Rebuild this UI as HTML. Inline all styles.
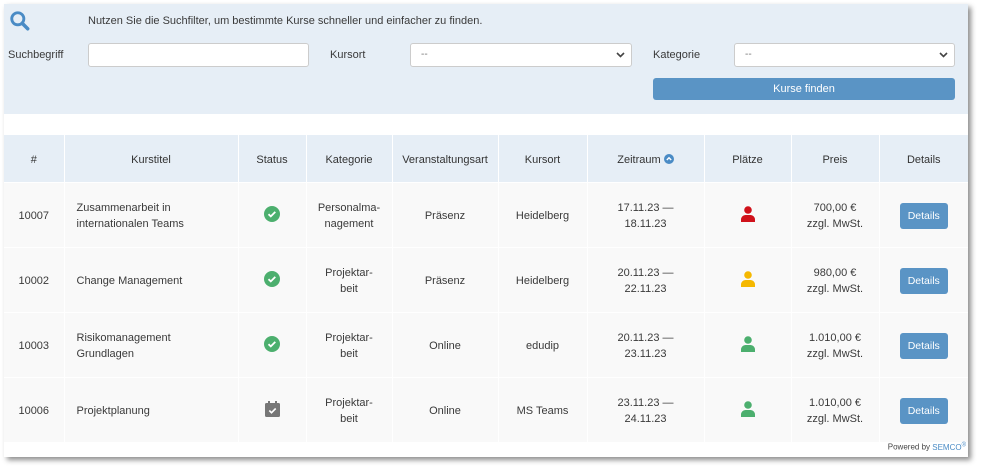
<!DOCTYPE html>
<html><head><meta charset="utf-8"><style>
*{box-sizing:border-box;margin:0;padding:0}
body{width:982px;height:470px;background:#fff;font-family:"Liberation Sans",sans-serif;font-size:11px;color:#3a3a3a;position:relative;overflow:hidden}
.card{position:absolute;left:4px;top:4px;width:964px;height:453px;background:#fff;box-shadow:3px 3px 5px rgba(0,0,0,.45)}
.panel{position:absolute;left:0;top:0;width:964px;height:110px;background:#e6eef6}
.a{position:absolute}
.inp{position:absolute;height:24px;background:#fff;border:1px solid #ccc;border-radius:3px;font-size:10px;color:#777;padding:5px 10px}
.inp svg{position:absolute;right:6px;top:8px}
.btn{position:absolute;background:#5a94c5;color:#fff;border-radius:3px;text-align:center;font-size:11px}
table{position:absolute;left:0;top:131px;width:964px;border-collapse:collapse}
th{background:#e6eef6;height:47px;padding-top:3px;font-weight:normal;color:#333;border-left:1px solid #fff;font-size:11px}
td{background:#f9f9f9;height:65px;padding-top:3px;text-align:center;border-left:1px solid #fff;border-top:1px solid #fff;line-height:16px;color:#3a3a3a}
th:first-child,td:first-child{border-left:none}
td.l{text-align:left;padding-left:12px}
.d{display:inline-block;background:#5a94c5;color:#fff;border-radius:3px;padding:5px 8px;font-size:10.5px}
</style></head><body>
<div class="card">
<div class="panel">
<svg class="a" style="left:5px;top:6px" width="22" height="22" viewBox="0 0 20 20"><circle cx="8" cy="8" r="5.5" fill="none" stroke="#4a8bc5" stroke-width="2.6"/><line x1="12" y1="12" x2="17" y2="17" stroke="#4a8bc5" stroke-width="3.2" stroke-linecap="round"/></svg>
<div class="a" style="left:84px;top:11px">Nutzen Sie die Suchfilter, um bestimmte Kurse schneller und einfacher zu finden.</div>
<div class="a" style="left:4px;top:45px">Suchbegriff</div>
<div class="inp" style="left:84px;top:39px;width:221px"></div>
<div class="a" style="left:326px;top:45px">Kursort</div>
<div class="inp" style="left:406px;top:39px;width:222px">--<svg width="9" height="6" viewBox="0 0 9 6"><path d="M1 1l3.5 3.5L8 1" fill="none" stroke="#444" stroke-width="1.6"/></svg></div>
<div class="a" style="left:649px;top:45px">Kategorie</div>
<div class="inp" style="left:730px;top:39px;width:221px">--<svg width="9" height="6" viewBox="0 0 9 6"><path d="M1 1l3.5 3.5L8 1" fill="none" stroke="#444" stroke-width="1.6"/></svg></div>
<div class="btn" style="left:649px;top:74px;width:302px;height:22px;line-height:22px">Kurse finden</div>
</div>
<table>
<tr><th style="width:60px">#</th><th style="width:174px">Kurstitel</th><th style="width:68px">Status</th><th style="width:86px">Kategorie</th><th style="width:106px">Veranstaltungsart</th><th style="width:89px">Kursort</th><th style="width:117px">Zeitraum <svg width="10" height="10" viewBox="0 0 10 10" style="vertical-align:-1px"><circle cx="5" cy="5" r="5" fill="#4a8bc5"/><path d="M2.8 6l2.2-2.2L7.2 6" fill="none" stroke="#fff" stroke-width="1.4"/></svg></th><th style="width:87px">Plätze</th><th style="width:88px">Preis</th><th>Details</th></tr>
<tr><td>10007</td><td class="l">Zusammenarbeit in<br>internationalen Teams</td><td><svg width="16" height="16"><circle cx="8" cy="8" r="8" fill="#4caf6e"/><path d="M4.5 8.2l2.3 2.2 4.5-4.5" fill="none" stroke="#fff" stroke-width="1.8"/></svg></td><td>Personalma-<br>nagement</td><td>Präsenz</td><td>Heidelberg</td><td>17.11.23 —<br>18.11.23</td><td><svg width="14" height="16"><circle cx="7" cy="4" r="3.8" fill="#d0121b"/><path d="M0 16v-2.5a4.5 4.5 0 0 1 4.5-4.5h5a4.5 4.5 0 0 1 4.5 4.5V16z" fill="#d0121b"/></svg></td><td>700,00 €<br>zzgl. MwSt.</td><td><span class="d">Details</span></td></tr>
<tr><td>10002</td><td class="l">Change Management</td><td><svg width="16" height="16"><circle cx="8" cy="8" r="8" fill="#4caf6e"/><path d="M4.5 8.2l2.3 2.2 4.5-4.5" fill="none" stroke="#fff" stroke-width="1.8"/></svg></td><td>Projektar-<br>beit</td><td>Präsenz</td><td>Heidelberg</td><td>20.11.23 —<br>22.11.23</td><td><svg width="14" height="16"><circle cx="7" cy="4" r="3.8" fill="#f5b800"/><path d="M0 16v-2.5a4.5 4.5 0 0 1 4.5-4.5h5a4.5 4.5 0 0 1 4.5 4.5V16z" fill="#f5b800"/></svg></td><td>980,00 €<br>zzgl. MwSt.</td><td><span class="d">Details</span></td></tr>
<tr><td>10003</td><td class="l">Risikomanagement<br>Grundlagen</td><td><svg width="16" height="16"><circle cx="8" cy="8" r="8" fill="#4caf6e"/><path d="M4.5 8.2l2.3 2.2 4.5-4.5" fill="none" stroke="#fff" stroke-width="1.8"/></svg></td><td>Projektar-<br>beit</td><td>Online</td><td>edudip</td><td>20.11.23 —<br>23.11.23</td><td><svg width="14" height="16"><circle cx="7" cy="4" r="3.8" fill="#4caf6e"/><path d="M0 16v-2.5a4.5 4.5 0 0 1 4.5-4.5h5a4.5 4.5 0 0 1 4.5 4.5V16z" fill="#4caf6e"/></svg></td><td>1.010,00 €<br>zzgl. MwSt.</td><td><span class="d">Details</span></td></tr>
<tr><td>10006</td><td class="l">Projektplanung</td><td><svg width="15" height="16"><rect x="3" y="0" width="2" height="4" fill="#777"/><rect x="10" y="0" width="2" height="4" fill="#777"/><rect x="0" y="2" width="15" height="14" rx="1.5" fill="#777"/><path d="M4.3 9.5l2.2 2.2 4.2-4.2" fill="none" stroke="#fff" stroke-width="1.6"/></svg></td><td>Projektar-<br>beit</td><td>Online</td><td>MS Teams</td><td>23.11.23 —<br>24.11.23</td><td><svg width="14" height="16"><circle cx="7" cy="4" r="3.8" fill="#4caf6e"/><path d="M0 16v-2.5a4.5 4.5 0 0 1 4.5-4.5h5a4.5 4.5 0 0 1 4.5 4.5V16z" fill="#4caf6e"/></svg></td><td>1.010,00 €<br>zzgl. MwSt.</td><td><span class="d">Details</span></td></tr>
</table>
<div class="a" style="right:2px;top:438px;font-size:8px;color:#444">Powered by <span style="color:#4a8bc5">SEMCO<sup style="font-size:6px">®</sup></span></div>
</div>
</body></html>
